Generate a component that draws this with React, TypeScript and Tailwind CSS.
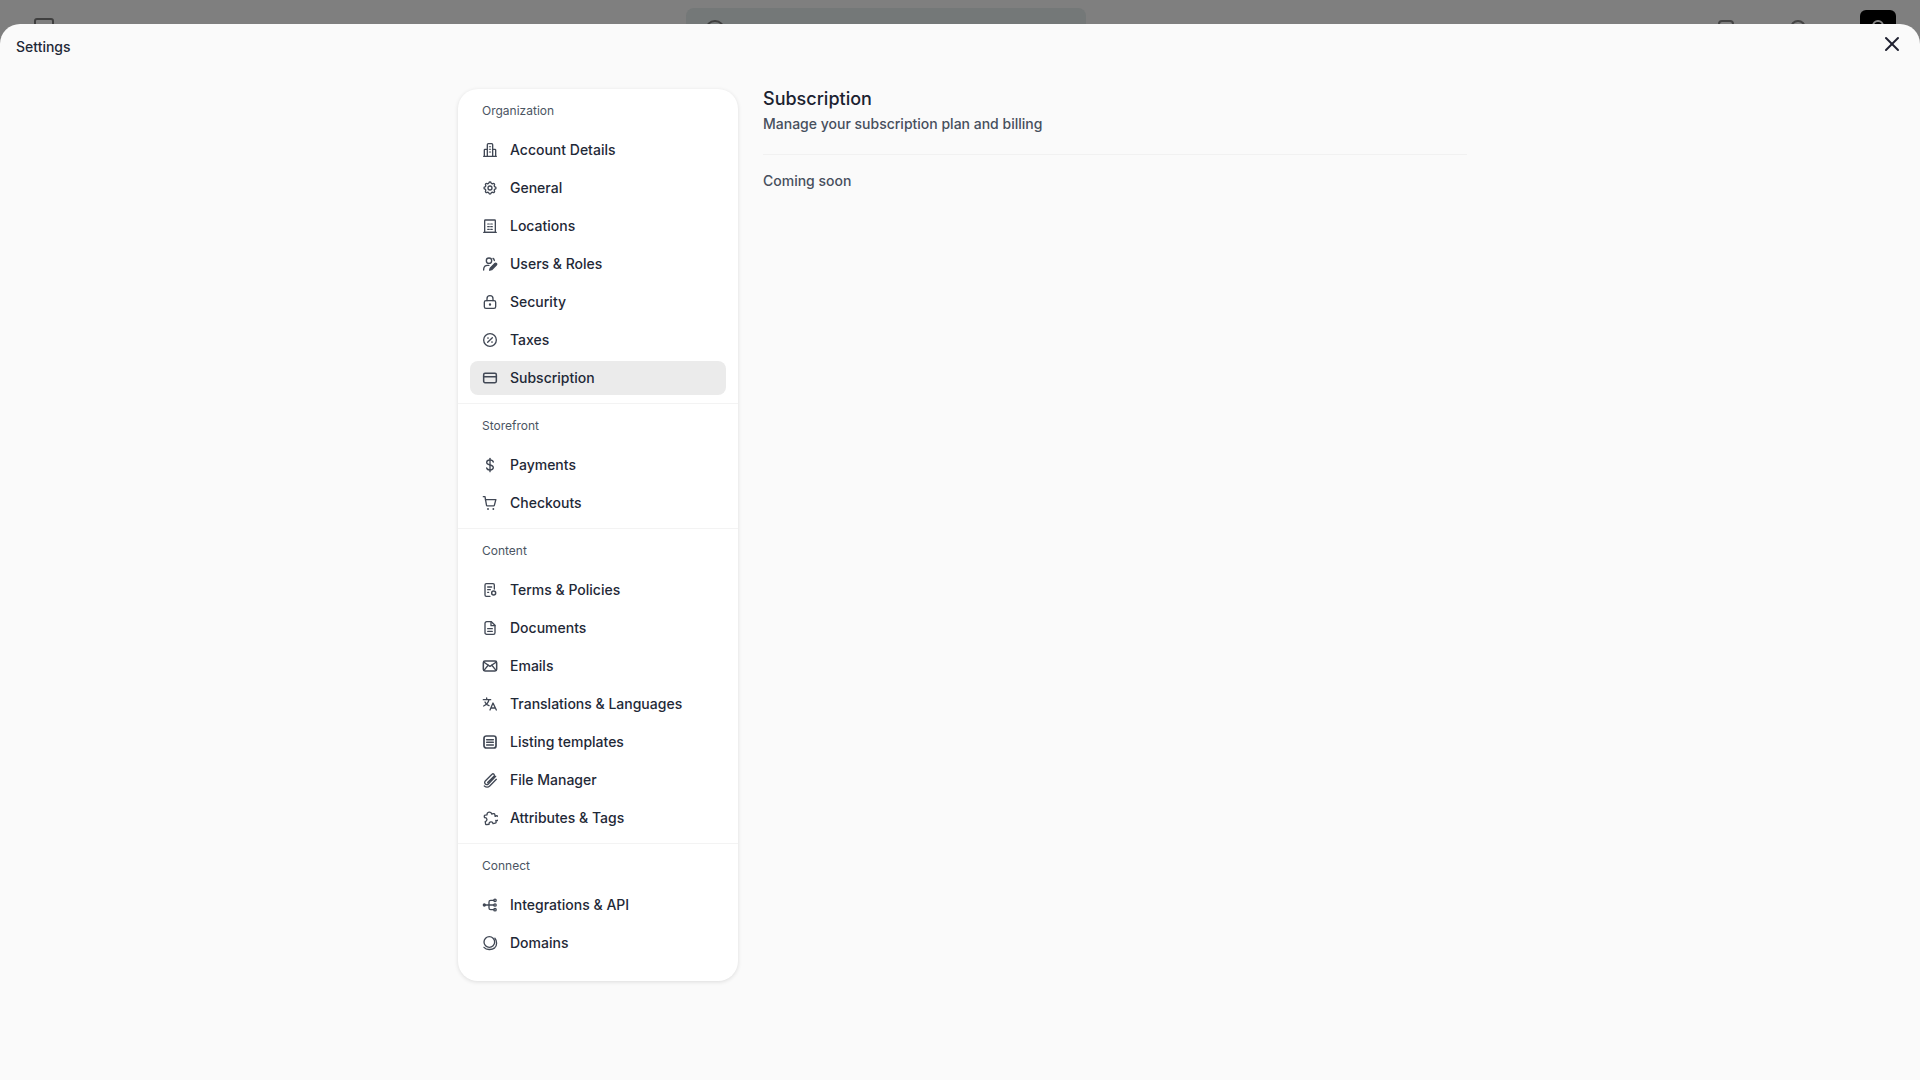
import React from "react";
import { X } from "lucide-react";

type IconProps = { children: React.ReactNode };

const Ico = ({ children }: IconProps) => (
  <svg
    viewBox="0 0 24 24"
    fill="none"
    stroke="currentColor"
    strokeWidth="2"
    strokeLinecap="round"
    strokeLinejoin="round"
    className="w-4 h-4 shrink-0 text-[#414855]"
  >
    {children}
  </svg>
);

const icons: Record<string, React.ReactNode> = {
  account: (
    <Ico>
      <path d="M2.5 21.500h19" />
      <path d="M8 21.500V4a1.500 1.500 0 0 1 1.500-1.500h5A1.500 1.500 0 0 1 16 4v17.500" />
      <path d="M8 11H4.500a1 1 0 0 0-1 1v9.500M16 11h3.500a1 1 0 0 1 1 1v9.500" />
      <path d="M11 7h2M11 11h2M11 15h2" strokeWidth="1.600" />
    </Ico>
  ),
  general: (
    <Ico>
      <path d="M10.325 4.317c.426-1.756 2.924-1.756 3.35 0a1.724 1.724 0 0 0 2.573 1.066c1.543-.94 3.31.826 2.37 2.37a1.724 1.724 0 0 0 1.065 2.572c1.756.426 1.756 2.924 0 3.35a1.724 1.724 0 0 0-1.066 2.573c.94 1.543-.826 3.31-2.37 2.37a1.724 1.724 0 0 0-2.572 1.065c-.426 1.756-2.924 1.756-3.35 0a1.724 1.724 0 0 0-2.573-1.066c-1.543.94-3.31-.826-2.37-2.37a1.724 1.724 0 0 0-1.065-2.572c-1.756-.426-1.756-2.924 0-3.35a1.724 1.724 0 0 0 1.066-2.573c-.94-1.543.826-3.31 2.37-2.37c1 .608 2.296.07 2.572-1.065z" />
      <circle cx="12" cy="12" r="3" />
    </Ico>
  ),
  locations: (
    <Ico>
      <path d="M2.500 21.500h19" />
      <rect x="4" y="3" width="16" height="18.500" rx="1" />
      <path d="M8.500 9h2.500M13 9h2.500M8.500 13h2.500M13 13h2.500M8.500 17h2.500M13 17h2.500" strokeWidth="1.700" />
    </Ico>
  ),
  users: (
    <Ico>
      <circle cx="10.500" cy="7" r="4" />
      <path d="M2.500 21v-1.500A6 6 0 0 1 8.500 14h2" />
      <path d="M16.500 3.500a4 4 0 0 1 2 3.200" />
      <path d="M21.500 13.500l-7 7-3 .8.800-3 7-7a1.500 1.500 0 0 1 2.200 2.200z" fill="currentColor" />
    </Ico>
  ),
  security: (
    <Ico>
      <rect x="3.500" y="10" width="17" height="11.500" rx="2.500" />
      <path d="M7.500 10V7a4.500 4.500 0 0 1 9 0v3" />
      <circle cx="12" cy="15.700" r="0.800" fill="currentColor" />
    </Ico>
  ),
  taxes: (
    <Ico>
      <circle cx="12" cy="12" r="9.500" />
      <path d="M15.500 8.500l-7 7" />
      <path d="M9 9h.01M15 15h.01" strokeWidth="2.600" />
    </Ico>
  ),
  subscription: (
    <Ico>
      <rect x="2.500" y="5" width="19" height="14" rx="2" strokeWidth="2.300" />
      <path d="M2.500 10h19" strokeWidth="2.300" />
    </Ico>
  ),
  payments: (
    <Ico>
      <path d="M17 7.500C16.500 5.500 14.500 4.500 12 4.500c-3 0-5 1.500-5 3.700 0 5 10 2.600 10 7.600 0 2.200-2 3.700-5 3.700-2.500 0-4.500-1-5-3" />
      <path d="M12 2v20" />
    </Ico>
  ),
  checkouts: (
    <Ico>
      <path d="M2 2.500h2.500l2.300 13a1 1 0 0 0 1 .8h9.700a1 1 0 0 0 1-.8L20.800 7H5" />
      <path d="M9 21h.01M17 21h.01" strokeWidth="2.800" />
    </Ico>
  ),
  terms: (
    <Ico>
      <path d="M12 21.500H6.500a2 2 0 0 1-2-2v-15a2 2 0 0 1 2-2h10a2 2 0 0 1 2 2v6" />
      <path d="M8.500 7.500h6M8.500 11.500h4M8.500 15.500h1.500" />
      <circle cx="17.500" cy="16.500" r="3" strokeWidth="2.200" />
    </Ico>
  ),
  documents: (
    <Ico>
      <path d="M14 2.500H7a2.500 2.500 0 0 0-2.500 2.500v14A2.500 2.500 0 0 0 7 21.500h10a2.500 2.500 0 0 0 2.500-2.500V8z" />
      <path d="M13.500 2.500V8.500H19.500" />
      <path d="M8.500 13h7M8.500 17h7" />
    </Ico>
  ),
  emails: (
    <Ico>
      <rect x="2" y="4.500" width="20" height="15" rx="2.500" strokeWidth="2.300" />
      <path d="M2.500 6l9.500 6.500L21.500 6M3 18.500l6.500-8M21 18.500l-6.500-8" />
    </Ico>
  ),
  translations: (
    <Ico>
      <path d="M2 5.500h11M7 3v2.500M10.500 5.500c-.8 4-3.500 7.500-8 9.500" />
      <path d="M4.500 9c1 2.500 3 4.500 6 5.500" />
      <path d="M12 21l4.500-10.500L21.500 21M13.500 18h6" />
    </Ico>
  ),
  listing: (
    <Ico>
      <rect x="3" y="3" width="18" height="18" rx="3.500" strokeWidth="2.600" />
      <path d="M7 8.500h10M7 12.500h10M7 16.500h10" strokeWidth="2.200" />
    </Ico>
  ),
  files: (
    <Ico>
      <path d="M20.500 6.500L9.500 18a3.200 3.200 0 0 1-4.600-4.500L15 3.500a2 2 0 0 1 3 2.800L8.500 15.800" />
      <path d="M21.500 11L12 20.500a6.500 6.500 0 0 1-8.500.5" />
    </Ico>
  ),
  attributes: (
    <Ico>
      <path d="M8.500 6.500a3.500 3.500 0 1 1 7 0h3a1.500 1.500 0 0 1 1.500 1.500v3a3.500 3.500 0 1 1 0 6v2.500a1.500 1.500 0 0 1-1.500 1.500H15a3 3 0 0 0-6 0H5.500A1.500 1.500 0 0 1 4 19v-3a3 3 0 0 0 0-6V8a1.500 1.500 0 0 1 1.500-1.500z" transform="rotate(-10 12 12)" />
    </Ico>
  ),
  integrations: (
    <Ico>
      <circle cx="3.500" cy="12" r="1.500" fill="currentColor" />
      <path d="M5 12h5.500M18 5h-5a2.500 2.500 0 0 0-2.500 2.500v9A2.500 2.500 0 0 0 13 19h5M10.500 12H18" />
      <circle cx="19.500" cy="5" r="1.800" />
      <circle cx="19.500" cy="12" r="1.800" />
      <circle cx="19.500" cy="19" r="1.800" />
    </Ico>
  ),
  domains: (
    <Ico>
      <circle cx="11" cy="10.500" r="8" />
      <path d="M3 18.500c3.500 4 11.500 4.500 16 .8 3.800-3.300 3.800-10.500.3-14.500" />
    </Ico>
  ),
};

const groups = [
  {
    label: "Organization",
    items: [
      ["Account Details", "account"],
      ["General", "general"],
      ["Locations", "locations"],
      ["Users & Roles", "users"],
      ["Security", "security"],
      ["Taxes", "taxes"],
      ["Subscription", "subscription"],
    ],
  },
  {
    label: "Storefront",
    items: [
      ["Payments", "payments"],
      ["Checkouts", "checkouts"],
    ],
  },
  {
    label: "Content",
    items: [
      ["Terms & Policies", "terms"],
      ["Documents", "documents"],
      ["Emails", "emails"],
      ["Translations & Languages", "translations"],
      ["Listing templates", "listing"],
      ["File Manager", "files"],
      ["Attributes & Tags", "attributes"],
    ],
  },
  {
    label: "Connect",
    items: [
      ["Integrations & API", "integrations"],
      ["Domains", "domains"],
    ],
  },
];

function TopBar() {
  return (
    <div className="h-[60px] flex items-start pl-[34px] pr-6 pt-2">
      <div className="w-5 h-4 mt-2.5 rounded-[3px] border-2 border-[#3f3f3f]" />
      <div className="w-[400px] h-11 ml-[632px] rounded-lg bg-[#747878] flex items-center justify-between pl-[19px] pr-3 text-sm text-[#333]">
        <div className="flex items-center gap-2">
          <div className="w-5 h-5 rounded-full border-2 border-[#3f3f3f]" />
          <span>Search</span>
        </div>
        <span>⌘K</span>
      </div>
      <div className="ml-auto flex items-start gap-[18px] pt-0.5">
        <div className="flex gap-5 mt-2.5">
          <div className="w-4 h-4 rounded border-2 border-[#444]" />
          <div className="w-4 h-4 flex justify-center gap-1 pt-1">
            <div className="w-0.5 h-3 bg-[#444]" />
            <div className="w-0.5 h-3 bg-[#444]" />
          </div>
          <div className="w-4 h-4 rounded-full border-2 border-[#444]" />
          <div className="w-4 h-0.5 mt-1 bg-[#444]" />
        </div>
        <div className="w-9 h-9 rounded-md bg-black flex justify-center pt-2.5">
          <div className="w-3 h-3 rounded-full border-2 border-[#888]" />
        </div>
      </div>
    </div>
  );
}

export default function App() {
  return (
    <div className="relative h-screen overflow-hidden bg-[#7f7f7f] font-['Inter',sans-serif]">
      <TopBar />

      <div className="absolute inset-x-0 top-6 bottom-0 bg-[#fafafa] rounded-t-[20px]">
        <span className="absolute left-4 top-[13px] text-sm font-medium leading-5 text-[#1f2937]">
          Settings
        </span>
        <button className="absolute right-4 top-2 text-[#1f2030]">
          <X className="w-6 h-6" strokeWidth={2} />
        </button>

        <div className="flex items-start pl-[458px] pt-[61px]">
          <nav className="w-[280px] shrink-0 mt-1 bg-white rounded-[20px] shadow-[0_1px_4px_rgba(0,0,0,0.12)] pb-[21px]">
            {groups.map((group, i) => (
              <div
                key={group.label}
                className={`px-3 pt-1.5 ${i < groups.length - 1 ? "pb-2 border-b border-[#f3f3f3]" : ""}`}
              >
                <div className="h-8 mb-1.5 px-3 flex items-center text-xs leading-4 text-[#4b5563]">
                  {group.label}
                </div>
                <div className="flex flex-col gap-1">
                  {group.items.map(([name, icon]) => (
                    <a
                      key={name}
                      className={`h-[34px] flex items-center gap-3 px-3 rounded-lg text-sm font-medium text-[#1f2937] ${name === "Subscription" ? "bg-[#ebebeb]" : ""}`}
                    >
                      {icons[icon]}
                      {name}
                    </a>
                  ))}
                </div>
              </div>
            ))}
          </nav>

          <main className="w-[704px] ml-[25px]">
            <h1 className="text-lg leading-7 font-medium text-[#1a2230]">Subscription</h1>
            <p className="text-sm leading-5 font-medium text-[#474f5d] mt-px">
              Manage your subscription plan and billing
            </p>
            <div className="border-t border-[#f1f1f1] mt-5" />
            <p className="text-sm leading-5 font-medium text-[#474f5d] mt-4">Coming soon</p>
          </main>
        </div>
      </div>
    </div>
  );
}
